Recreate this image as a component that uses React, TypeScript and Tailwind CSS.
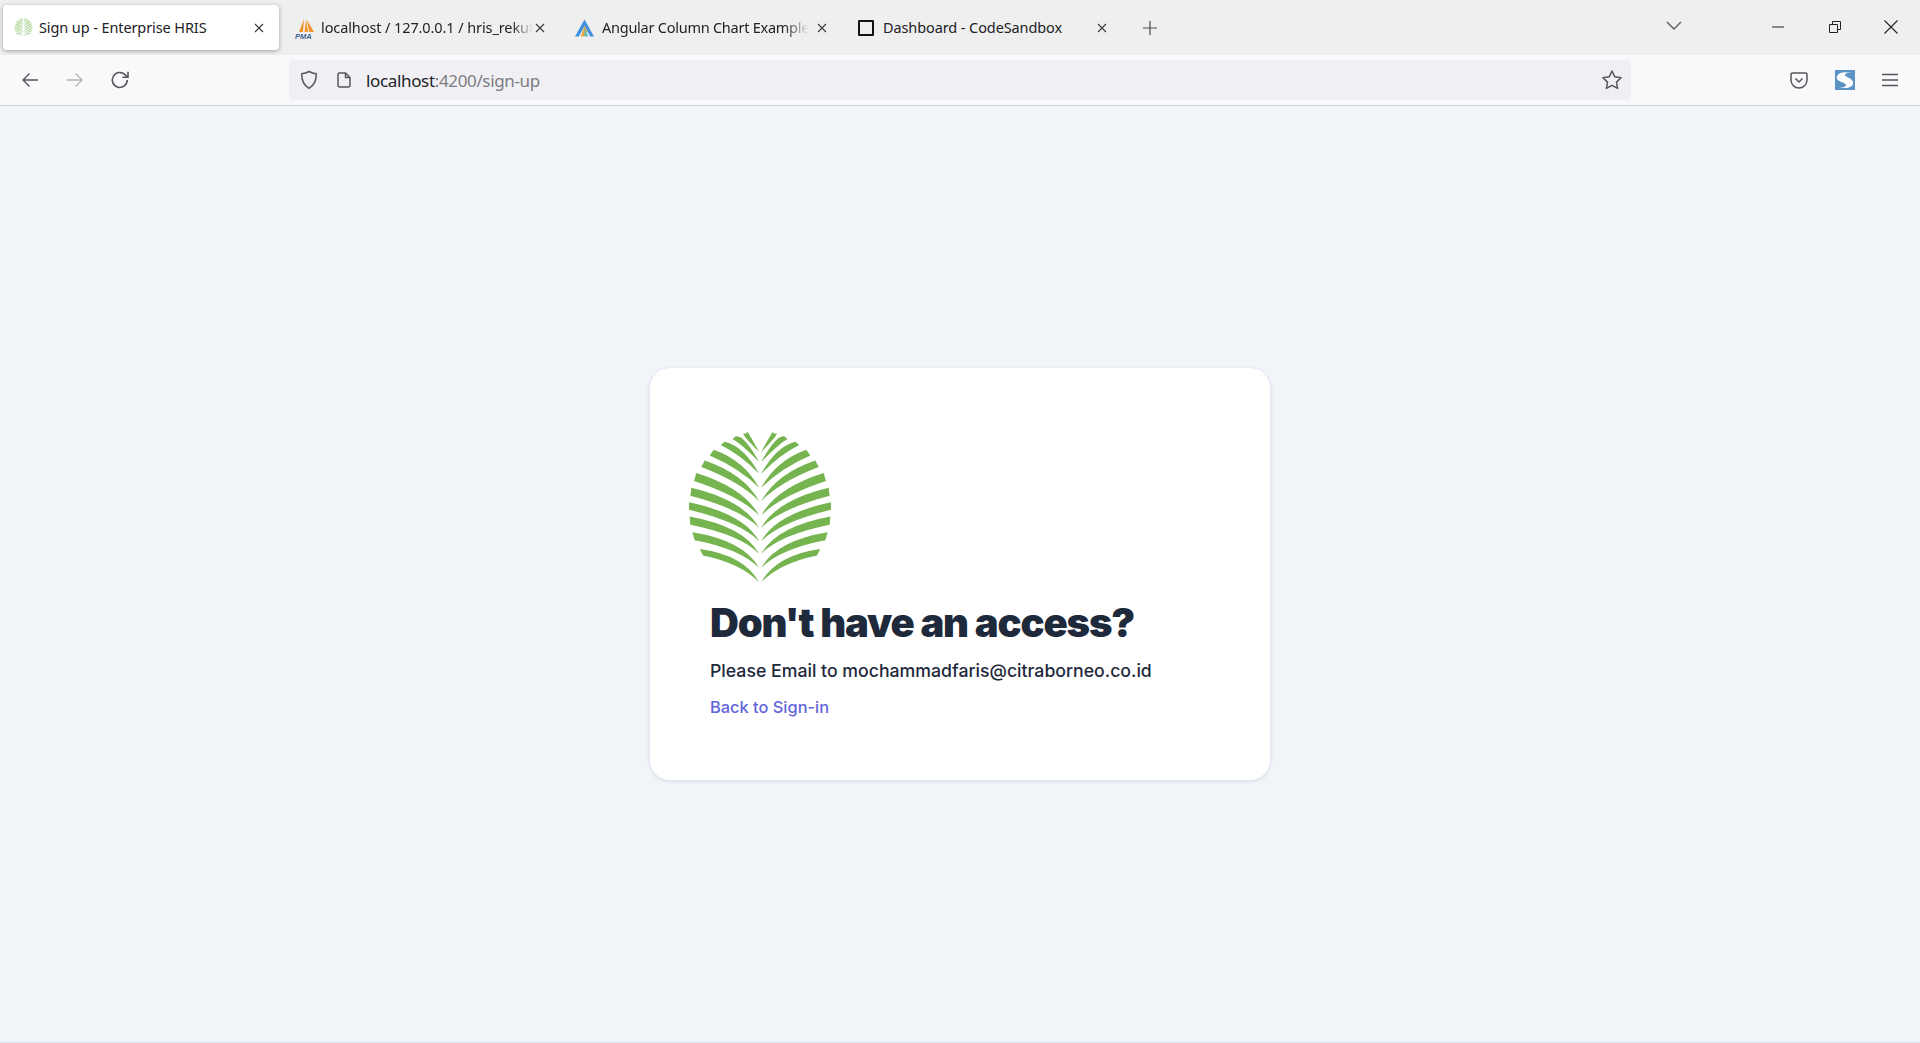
import React from "react";

const fronds: number[][] = [
  [120, 415, 130, 435, 515],
  [98, 365, 105, 389, 472],
  [90, 318, 92, 343, 430],
  [88, 275, 88, 298, 392],
  [95, 232, 92, 256, 352],
  [110, 188, 103, 212, 315],
  [135, 150, 125, 170, 272],
  [162, 118, 150, 135, 232],
  [195, 94, 183, 104, 190],
  [228, 78, 218, 86, 155],
  [262, 68, 252, 70, 125],
];

function Palm({ className }: { className?: string }) {
  return (
    <svg viewBox="85 65 431 455" className={className}>
      {fronds.map(([tx, ty, bx, by, sy], i) => {
        const sx = 298;
        const left = `M${tx} ${ty}Q${sx - 45} ${sy - 82} ${sx} ${sy}Q${sx - 56} ${sy - 57} ${bx} ${by}Z`;
        const rsx = 304;
        const rt = 601 - tx;
        const rb = 601 - bx;
        const right = `M${rt} ${ty}Q${rsx + 45} ${sy - 82} ${rsx} ${sy}Q${rsx + 56} ${sy - 57} ${rb} ${by}Z`;
        return (
          <g key={i} fill="#75b44f">
            <path d={left} />
            <path d={right} />
          </g>
        );
      })}
    </svg>
  );
}

function CloseX({ className }: { className?: string }) {
  return (
    <svg viewBox="0 0 12 12" className={className} fill="none" stroke="#3a3a3e" strokeWidth="1.1">
      <path d="M2 2l8 8M10 2l-8 8" />
    </svg>
  );
}

function Tab({
  icon,
  title,
  iconClass,
  textClass,
  closeClass,
}: {
  icon: React.ReactNode;
  title: string;
  iconClass: string;
  textClass: string;
  closeClass: string;
}) {
  return (
    <div className="flex items-center h-[45px]">
      <div className={iconClass}>{icon}</div>
      <div className={textClass}>{title}</div>
      <CloseX className={closeClass} />
    </div>
  );
}

export default function App() {
  return (
    <div className="w-full h-[1043px] flex flex-col overflow-hidden bg-[#f1f4f9] font-['Noto_Sans','Open_Sans',sans-serif]">
      <div className="h-[55px] bg-[#efeff0] flex items-start pt-[5px] shrink-0">
        <div className="ml-[3px] w-[276px] h-[45px] bg-white rounded-[4px] shadow-[0_1px_4px_rgba(0,0,0,0.35)] flex items-center">
          <Palm className="ml-[11px] w-[19px] h-[19px] opacity-60" />
          <div className="ml-[6px] w-[195px] pt-[1px] text-[14.5px] tracking-[-0.1px] text-[#222226] whitespace-nowrap">
            Sign up - Enterprise HRIS
          </div>
          <CloseX className="ml-[19px] w-[12px] h-[12px]" />
        </div>
        <Tab
          iconClass="ml-[16px] w-[20px] h-[20px] mt-[3px]"
          icon={
            <svg viewBox="0 0 20 20" className="w-full h-full">
              <path d="M9 0L4 13h4zM11 0L9.500 13H13zM12 1l2 12h5z" fill="#f0962a" />
              <text x="0" y="19.500" fontSize="7.500" fontWeight="700" fontStyle="italic" fill="#3b5f8f" fontFamily="Liberation Sans">PMA</text>
            </svg>
          }
          title="localhost / 127.0.0.1 / hris_rekut"
          textClass="ml-[6px] w-[212px] pt-[1px] text-[14.5px] tracking-[-0.1px] text-[#222226] whitespace-nowrap [mask-image:linear-gradient(to_right,black_90%,transparent)]"
          closeClass="ml-[1px] w-[12px] h-[12px]"
        />
        <Tab
          iconClass="ml-[29px] w-[19px] h-[18px]"
          icon={
            <svg viewBox="0 0 20 18" className="w-full h-full">
              <path d="M10 0L20 18h-4L10 7 4 18H0z" fill="#3f8fe0" />
              <path d="M10 7l3 5-3 6H6z" fill="#e8a23c" />
              <path d="M10 9l2 4 2 5h-4z" fill="#5cc0c0" />
            </svg>
          }
          title="Angular Column Chart Example"
          textClass="ml-[8px] w-[207px] pt-[1px] text-[14.5px] tracking-[-0.25px] text-[#222226] whitespace-nowrap [mask-image:linear-gradient(to_right,black_88%,transparent)]"
          closeClass="ml-[7px] w-[12px] h-[12px]"
        />
        <Tab
          iconClass="ml-[30px] w-[16px] h-[16px] border-2 border-[#111] rounded-[1px]"
          icon={null}
          title="Dashboard - CodeSandbox"
          textClass="ml-[9px] w-[213px] pt-[1px] text-[14.5px] tracking-[-0.1px] text-[#222226] whitespace-nowrap"
          closeClass="w-[12px] h-[12px]"
        />
        <svg viewBox="0 0 16 16" className="ml-[34px] mt-[15px] w-[16px] h-[16px]" fill="none" stroke="#4a4a4f" strokeWidth="1.2">
          <path d="M8 1v14M1 8h14" />
        </svg>
        <div className="flex-1" />
        <svg viewBox="0 0 16 10" className="mt-[16px] w-[16px] h-[10px]" fill="none" stroke="#5b5b60" strokeWidth="1.4">
          <path d="M1 1l7 7 7-7" />
        </svg>
        <svg viewBox="0 0 12 2" className="ml-[90px] mt-[21px] w-[12px] h-[2px]" fill="none" stroke="#222" strokeWidth="1">
          <path d="M0 1h12" />
        </svg>
        <svg viewBox="0 0 12 12" className="ml-[45px] mt-[16px] w-[12px] h-[12px]" fill="none" stroke="#222" strokeWidth="1">
          <path d="M.5 3.500h8v8h-8zM3.500 3.500v-3h8v8h-3" />
        </svg>
        <svg viewBox="0 0 14 14" className="ml-[43px] mr-[22px] mt-[15px] w-[14px] h-[14px]" fill="none" stroke="#222" strokeWidth="1.1">
          <path d="M.5.5l13 13M13.500.5l-13 13" />
        </svg>
      </div>

      <div className="h-[51px] bg-[#f9f9fb] border-b border-[#cfcfd4] flex items-center shrink-0">
        <svg viewBox="0 0 18 16" className="ml-[21px] w-[18px] h-[16px]" fill="none" stroke="#55555a" strokeWidth="1.4">
          <path d="M17 8H2M8.500 1.500L2 8l6.500 6.500" />
        </svg>
        <svg viewBox="0 0 18 16" className="ml-[27px] w-[18px] h-[16px]" fill="none" stroke="#b4b4b8" strokeWidth="1.4">
          <path d="M1 8h15M9.500 1.500L16 8l-6.500 6.500" />
        </svg>
        <svg viewBox="0 0 18 18" className="ml-[26px] w-[20px] h-[20px]" fill="none" stroke="#55555a" strokeWidth="1.4">
          <path d="M15.500 9a6.700 6.700 0 1 1-2-4.800L16 6.500" />
          <path d="M16.200 1.500v5h-5" />
        </svg>
        <div className="ml-[159px] w-[1342px] h-[40px] rounded-[4px] bg-[#f0f0f4] flex items-center">
          <svg viewBox="0 0 18 20" className="ml-[11px] w-[18px] h-[20px]" fill="none" stroke="#55555a" strokeWidth="1.5">
            <path d="M9 1.500c2.500 1.300 4.700 2 7.200 2.300.3 7-2 11.500-7.200 14.500C3.800 15.300 1.500 10.800 1.800 3.800 4.300 3.500 6.500 2.800 9 1.500z" />
          </svg>
          <svg viewBox="0 0 14 16" className="ml-[19px] w-[14px] h-[16px]" fill="none" stroke="#55555a" strokeWidth="1.5">
            <path d="M2.500 1h6L13 5.500V13a2 2 0 0 1-2 2H3a2 2 0 0 1-2-2V2.500A1.500 1.500 0 0 1 2.500 1zM8.500 1v4.500H13" />
          </svg>
          <div className="ml-[15px] pt-[2px] text-[17px] tracking-[-0.35px] text-[#7c7c80] whitespace-nowrap">
            <span className="text-[#222226]">localhost</span>:4200/sign-up
          </div>
          <div className="flex-1" />
          <svg viewBox="0 0 22 22" className="mr-[8px] w-[22px] h-[22px]" fill="none" stroke="#55555a" strokeWidth="1.5" strokeLinejoin="round">
            <path d="M11 2l2.800 5.800 6.300.9-4.600 4.400 1.100 6.300L11 16.400l-5.600 3 1.100-6.300L1.900 8.700l6.300-.9z" />
          </svg>
        </div>
        <div className="flex-1" />
        <svg viewBox="0 0 18 17" className="w-[18px] h-[17px]" fill="none" stroke="#55555a" strokeWidth="1.5">
          <path d="M2.500 1h13A1.500 1.500 0 0 1 17 2.500V8A8 8 0 0 1 1 8V2.500A1.500 1.500 0 0 1 2.500 1z" />
          <path d="M5.500 6.500L9 10l3.500-3.500" />
        </svg>
        <svg viewBox="0 0 20 20" className="ml-[27px] w-[20px] h-[20px]">
          <rect width="20" height="20" fill="#5b93c4" />
          <path d="M2 6c3-5 9-4 15-3-4 0-7 0-7 2 0 2 7 3 8 7 1 4-4 6-8 6H2c6 0 9-1 9-3 0-3-11-3-9-9z" fill="#fff" />
        </svg>
        <svg viewBox="0 0 16 14" className="ml-[27px] mr-[22px] w-[16px] h-[14px]" fill="none" stroke="#55555a" strokeWidth="1.4">
          <path d="M0 1.500h16M0 7h16M0 12.500h16" />
        </svg>
      </div>

      <div className="flex-1 flex items-center justify-center">
        <div className="w-[620px] h-[412px] bg-white rounded-[20px] shadow-[0_1px_4px_rgba(100,116,139,0.2)] pt-[64px] pl-[60px]">
          <Palm className="-ml-[22px] w-[144px] h-[152px]" />
          <h1 className="mt-[15px] text-[40px] leading-[48px] font-black tracking-[-1.15px] text-[#1e293b] font-['Inter',sans-serif] whitespace-nowrap">
            Don't have an access?
          </h1>
          <p className="mt-[10px] text-[17.7px] leading-[28px] font-medium text-[#1e293b] font-['Inter',sans-serif] whitespace-nowrap">
            Please Email to mochammadfaris@citraborneo.co.id
          </p>
          <a className="block mt-[10px] text-[16.4px] leading-[24px] font-medium text-[#6366d9] font-['Inter',sans-serif]">
            Back to Sign-in
          </a>
        </div>
      </div>
      <div className="h-[1px] bg-[#d8e4ec] shrink-0" />
    </div>
  );
}
